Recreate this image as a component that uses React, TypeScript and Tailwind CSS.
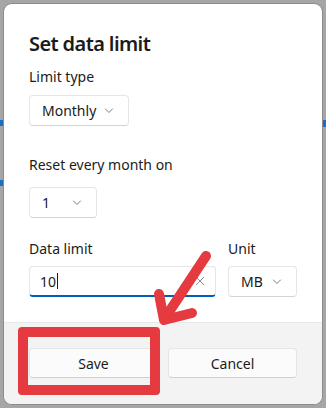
import React from "react";

const Chevron = () => (
  <svg width="10" height="6" viewBox="0 0 10 6" className="shrink-0">
    <polyline points="1.5,1 5,4.5 8.5,1" fill="none" stroke="#7a7a7a" strokeWidth="1" strokeLinecap="round" strokeLinejoin="round" />
  </svg>
);

const Dropdown = ({ label, w }: { label: string; w: string }) => (
  <div className={`${w} h-[31px] flex items-center justify-between pl-[12px] pr-[14px] rounded-[4px] bg-white border border-[#e6e6e6] border-b-[#d4d4d4] text-[14px] text-[#1b1b1b]`}>
    <span>{label}</span>
    <Chevron />
  </div>
);

export default function App() {
  return (
    <div
      className="relative w-[326px] h-[408px] bg-[#a6a6a6] p-[4px] overflow-hidden"
      style={{ fontFamily: '"Noto Sans", "Open Sans", sans-serif' }}
    >
      {/* background hints */}
      <div className="absolute left-0 top-[120px] w-[5px] h-[6px] bg-[#1a6fc0]" />
      <div className="absolute left-0 top-[180px] w-[5px] h-[6px] bg-[#1a6fc0]" />
      <div className="absolute right-0 top-[120px] w-[5px] h-[7px] bg-[#1a6fc0]" />

      <div className="relative w-[318px] h-[400px] bg-white rounded-[8px] overflow-hidden flex flex-col shadow-[0_0_0_1px_#8c8c8c]">
        <div className="flex-1 px-[25px] pt-[26px] flex flex-col items-start">
          <div className="text-[20px] leading-[28px] font-semibold text-[#1b1b1b] tracking-[-0.6px]">Set data limit</div>
          <div className="mt-[9px] text-[14px] leading-[20px] text-[#1b1b1b]">Limit type</div>
          <div className="mt-[8px]"><Dropdown label="Monthly" w="w-[100px]" /></div>
          <div className="mt-[29px] text-[14px] leading-[20px] text-[#1b1b1b]">Reset every month on</div>
          <div className="mt-[12px]"><Dropdown label="1" w="w-[68px]" /></div>
          <div className="mt-[21px] flex gap-[12px] w-full">
            <div className="w-[187px] flex flex-col">
              <div className="text-[14px] leading-[20px] text-[#1b1b1b]">Data limit</div>
              <div className="mt-[7px] h-[31px] flex items-center justify-between pl-[10px] pr-[10px] rounded-[4px] bg-white border border-[#e6e6e6] border-b-2 border-b-[#005fb8] text-[14px] text-[#1b1b1b]">
                <span className="flex items-center">10<span className="inline-block w-px h-[16px] bg-[#1b1b1b] ml-[1px]" /></span>
                <svg width="10" height="10" viewBox="0 0 10 10">
                  <path d="M1 1 L9 9 M9 1 L1 9" stroke="#8a8a8a" strokeWidth="1" />
                </svg>
              </div>
            </div>
            <div className="flex flex-col">
              <div className="text-[14px] leading-[20px] text-[#1b1b1b]">Unit</div>
              <div className="mt-[7px]"><Dropdown label="MB" w="w-[69px]" /></div>
            </div>
          </div>
        </div>
        <div className="h-[82px] bg-[#f3f3f3] border-t border-[#e8e8e8] px-[25px] pt-[25px] flex gap-[10px]">
          <div className="w-[129px] h-[30px] flex items-center justify-center rounded-[4px] bg-[#fbfbfb] border border-[#e5e5e5] border-b-[#d0d0d0] text-[14px] text-[#1b1b1b]">Save</div>
          <div className="w-[129px] h-[30px] flex items-center justify-center rounded-[4px] bg-[#fbfbfb] border border-[#e5e5e5] border-b-[#d0d0d0] text-[14px] text-[#1b1b1b]">Cancel</div>
        </div>
      </div>

      {/* annotation overlay */}
      <div className="absolute left-[18px] top-[327px] w-[142px] h-[68px] border-[10px] border-[#e53a3f] rounded-[4px]" />
      <svg className="absolute left-0 top-0" width="326" height="408" viewBox="0 0 326 408">
        <g fill="none" stroke="#e53a3f" strokeWidth="10" strokeLinecap="round" strokeLinejoin="round">
          <path d="M206 256 L165 318" />
          <path d="M159 294 L164 320 L192 313" />
        </g>
      </svg>
    </div>
  );
}
